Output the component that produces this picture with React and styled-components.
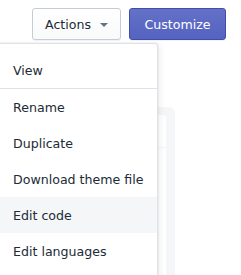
import React from "react";
import styled, { createGlobalStyle } from "styled-components";

const GlobalStyle = createGlobalStyle`
  html, body {
    margin: 0;
    padding: 0;
    background: #ffffff;
    font-family: "DejaVu Sans", "Noto Sans", sans-serif;
    color: #212b36;
    overflow: hidden;
  }
`;

const Page = styled.div`
  position: relative;
  width: 241px;
  height: 275px;
  overflow: hidden;
`;

const Header = styled.div`
  display: flex;
  justify-content: flex-end;
  gap: 8px;
  padding: 8px 15px 0 0;
`;

const Button = styled.button`
  display: flex;
  align-items: center;
  justify-content: center;
  flex-shrink: 0;
  gap: 9px;
  box-sizing: border-box;
  width: ${(p) => (p.$primary ? "97px" : "89px")};
  height: 32px;
  padding: 0;
  border-radius: 3px;
  font-family: inherit;
  font-size: 12.6px;
  border: 1px solid ${(p) => (p.$primary ? "#3f4eae" : "#c4cdd5")};
  background: ${(p) =>
    p.$primary
      ? "linear-gradient(180deg, #6371c7, #5563c1)"
      : "linear-gradient(180deg, #ffffff, #f9fafb)"};
  color: ${(p) => (p.$primary ? "#ffffff" : "#212b36")};
  box-shadow: 0 1px 0 0 rgba(22, 29, 37, 0.05);
`;

const Caret = styled.span`
  width: 0;
  height: 0;
  border-left: 4px solid transparent;
  border-right: 4px solid transparent;
  border-top: 4px solid #637381;
  margin-top: 1px;
`;

const Panel = styled.div`
  margin: 67px 66px 0 15px;
  height: 200px;
  padding: 8px 9px 0 8px;
  background: #f4f6f8;
  border-radius: 6px 6px 0 0;
`;

const Card = styled.div`
  position: relative;
  height: 100%;
  background: #ffffff;
  border-radius: 3px 3px 0 0;
`;

const CardRow = styled.div`
  height: 32px;
  border-bottom: 1px solid #f4f6f8;
`;

const Handle = styled.span`
  position: absolute;
  right: 8px;
  top: 15px;
  width: 2px;
  height: 6px;
  background: repeating-linear-gradient(180deg, #919eab 0 1px, transparent 1px 2px);
`;

const Menu = styled.div`
  position: absolute;
  top: 43px;
  left: -20px;
  width: 176px;
  padding: 8px 0;
  background: #ffffff;
  border: 1px solid #dfe3e8;
  border-radius: 3px;
  box-shadow: 0 0 0 1px rgba(6, 44, 82, 0.04),
    2px 2px 6px rgba(33, 43, 54, 0.08);
`;

const Section = styled.div`
  border-top: ${(p) => (p.$divided ? "1px solid #dfe3e8" : "none")};
`;

const Item = styled.div`
  height: 36px;
  display: flex;
  align-items: center;
  padding-left: 32px;
  font-size: 12.6px;
  color: #212b36;
  background: ${(p) => (p.$active ? "#f4f6f8" : "transparent")};
`;

const actions = [
  "Rename",
  "Duplicate",
  "Download theme file",
  "Edit code",
  "Edit languages",
];

export default function App() {
  return (
    <Page>
      <GlobalStyle />
      <Header>
        <Button>
          Actions
          <Caret />
        </Button>
        <Button $primary>Customize</Button>
      </Header>
      <Panel>
        <Card>
          <CardRow />
          <Handle />
        </Card>
      </Panel>
      <Menu>
        <Section>
          <Item>View</Item>
        </Section>
        <Section $divided>
          {actions.map((label) => (
            <Item key={label} $active={label === "Edit code"}>
              {label}
            </Item>
          ))}
        </Section>
      </Menu>
    </Page>
  );
}
